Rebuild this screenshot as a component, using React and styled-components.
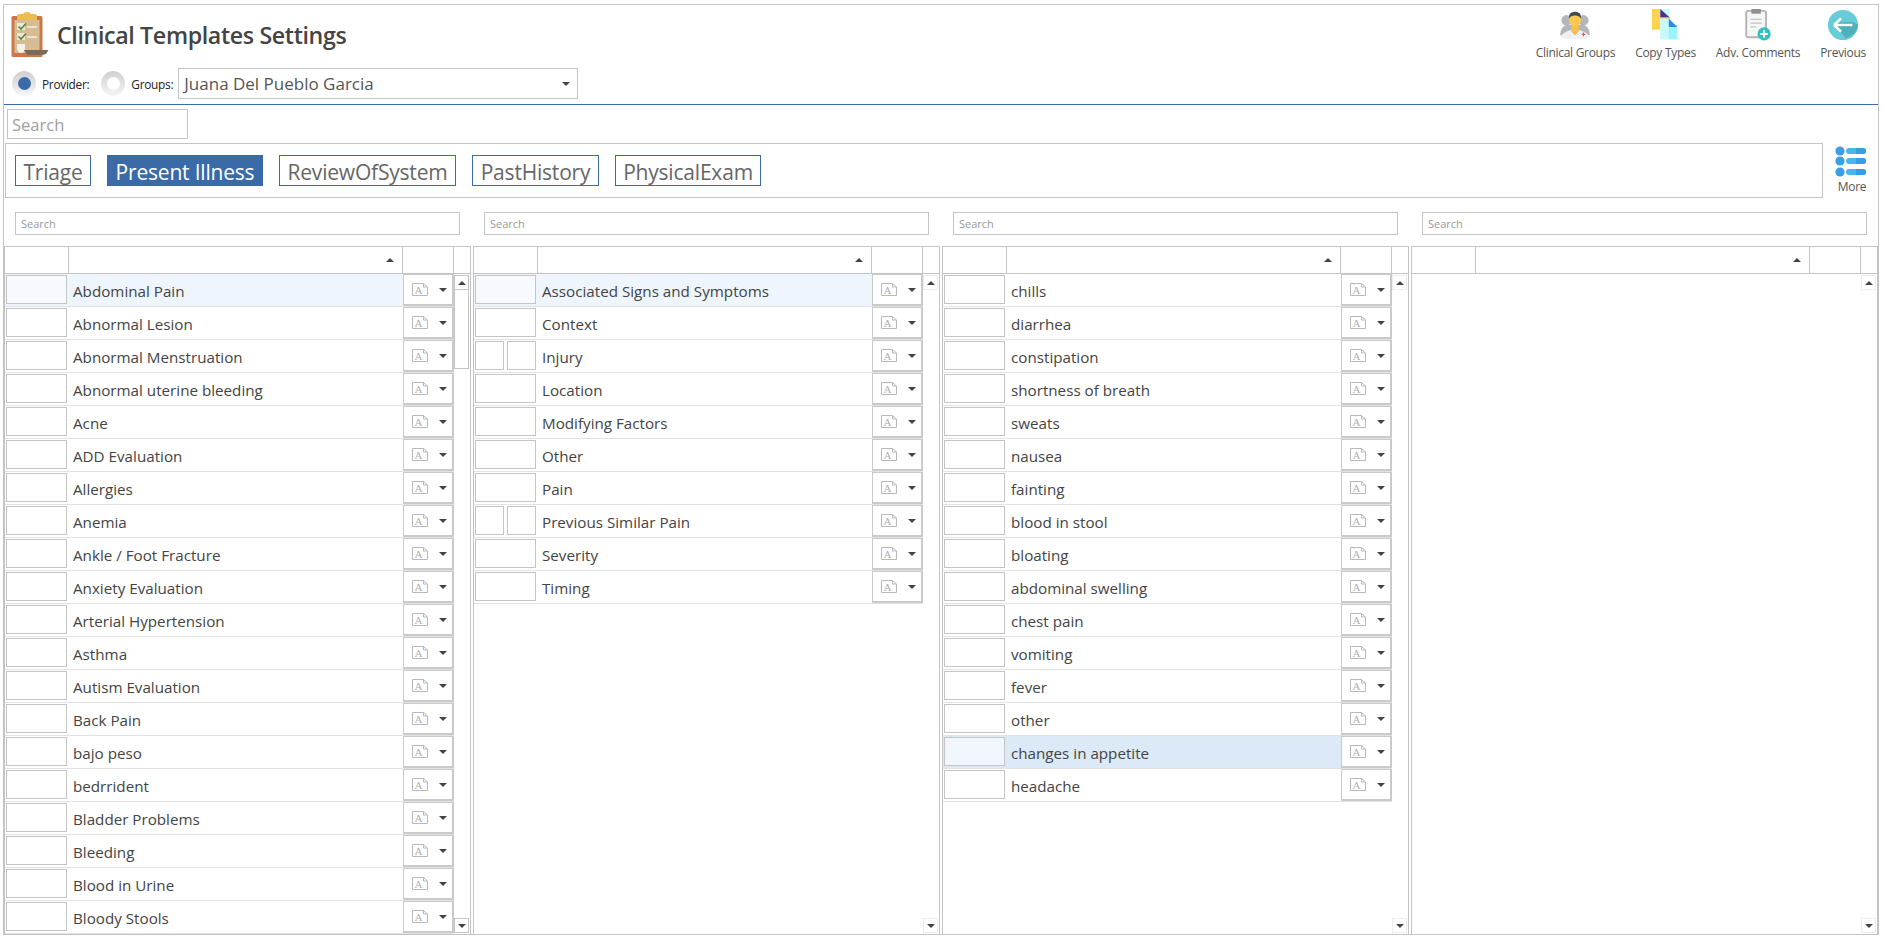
import React from 'react'
import styled, { createGlobalStyle } from 'styled-components'

const GlobalStyle = createGlobalStyle`
  html, body {
    margin: 0;
    height: 100%;
    overflow: hidden;
    background: #fff;
  }
  body {
    font-family: "Open Sans", "Noto Sans", sans-serif;
    color: #444;
  }
  * { box-sizing: border-box; }
`

const Frame = styled.div`
  width: 1876px;
  height: 931px;
  margin: 4px 0 0 3px;
  border: 1px solid #c4c4c4;
  display: flex;
  flex-direction: column;
  overflow: hidden;
`

const Header = styled.header`
  height: 100px;
  flex: none;
  border-bottom: 1px solid #3a6ba8;
  display: flex;
  justify-content: space-between;
  padding: 0 12px 0 7px;
`

const HeaderLeft = styled.div`
  display: flex;
  flex-direction: column;
  padding-top: 7px;
`

const TitleRow = styled.div`
  height: 46px;
  display: flex;
  align-items: center;
  gap: 8px;
`

const Title = styled.h1`
  margin: 0;
  font-size: 23.2px;
  font-weight: 600;
  color: #444;
  letter-spacing: -0.35px;
`

const PickerRow = styled.div`
  margin-top: 10px;
  display: flex;
  align-items: center;
  height: 31px;
  margin-left: 1px;
`

const Radio = styled.span`
  width: 24px;
  height: 25px;
  border-radius: 50%;
  background: linear-gradient(#cfcfcf, #f6f6f6);
  display: flex;
  align-items: center;
  justify-content: center;
  flex: none;

  &::after {
    content: '';
    width: 13px;
    height: 13px;
    border-radius: 50%;
    background: ${(p) => (p.$on ? '#3a6ba8' : '#fff')};
  }
`

const RadioLabel = styled.span`
  font-size: 11.9px;
  color: #222;
  letter-spacing: -0.3px;
  margin: 0 ${(p) => p.$after}px 0 6px;
`

const Select = styled.div`
  width: 400px;
  height: 31px;
  border: 1px solid #c4c4c4;
  display: flex;
  align-items: center;
  justify-content: space-between;
  padding: 0 7px 0 5px;
  font-size: 17px;
  color: #555;
`

const Caret = styled.span`
  width: 0;
  height: 0;
  border-left: 4px solid transparent;
  border-right: 4px solid transparent;
  border-${(p) => (p.$up ? 'bottom' : 'top')}: 4px solid #444;
`

const Toolbar = styled.nav`
  display: flex;
  gap: 20px;
  padding-top: 4px;
`

const ToolButton = styled.div`
  display: flex;
  flex-direction: column;
  align-items: center;
  font-size: 12px;
  line-height: 16px;
  color: #555;
  letter-spacing: -0.3px;
  white-space: nowrap;

  svg { display: block; height: 32px; margin-bottom: 4px; }
`

const MainSearch = styled.div`
  width: 181px;
  height: 30px;
  margin: 4px 0 0 3px;
  flex: none;
  border: 1px solid #c4c4c4;
  padding: 0 4px;
  display: flex;
  align-items: center;
  font-size: 16.5px;
  color: #a0a0a0;
`

const TabRow = styled.div`
  margin-top: 4px;
  height: 55px;
  flex: none;
  display: flex;
  padding-left: 1px;
`

const TabPanel = styled.div`
  width: 1818px;
  border: 1px solid #c4c4c4;
  padding: 11px 0 0 9px;
  display: flex;
  gap: 16px;
`

const Tab = styled.div`
  height: 31px;
  width: ${(p) => p.$w}px;
  border: 1px solid #3a6ba8;
  background: ${(p) => (p.$active ? '#3a6ba8' : '#fff')};
  color: ${(p) => (p.$active ? '#fff' : '#666')};
  font-size: 21px;
  letter-spacing: -0.2px;
  padding-top: 2px;
  display: flex;
  align-items: center;
  justify-content: center;
  white-space: nowrap;
`

const MoreButton = styled.div`
  flex: 1;
  display: flex;
  flex-direction: column;
  align-items: center;
  padding: 3px 0 0 3px;
  font-size: 12px;
  letter-spacing: -0.3px;
  color: #555;
  line-height: 14px;

  svg { display: block; margin-bottom: 3px; }
`

const SearchRow = styled.div`
  margin-top: 14px;
  padding: 0 11px;
  height: 23px;
  flex: none;
  display: grid;
  grid-template-columns: repeat(4, 1fr);
  gap: 24px;
`

const ColumnSearch = styled.div`
  border: 1px solid #c4c4c4;
  padding: 0 5px;
  display: flex;
  align-items: center;
  font-size: 11px;
  color: #999;
`

const Grids = styled.div`
  margin-top: 11px;
  flex: 1;
  min-height: 0;
  display: grid;
  grid-template-columns: repeat(4, 1fr);
  gap: 2px;
`

const Panel = styled.section`
  border: 1px solid #c4c4c4;
  border-bottom: 0;
  display: flex;
  flex-direction: column;
  min-height: 0;
  overflow: hidden;
`

const HeadRow = styled.div`
  height: 27px;
  flex: none;
  display: grid;
  grid-template-columns: 64px 1fr 51px 16px;
  border-bottom: 1px solid #c4c4c4;
`

const HeadCell = styled.div`
  border-right: ${(p) => (p.$last ? '0' : '1px solid #c4c4c4')};
  display: flex;
  align-items: center;
  justify-content: flex-end;
  padding-right: 8px;
`

const Body = styled.div`
  flex: 1;
  min-height: 0;
  display: flex;
`

const List = styled.div`
  flex: 1;
  min-width: 0;
`

const Row = styled.div`
  height: 33px;
  display: grid;
  grid-template-columns: 64px 1fr 51px;
  border-bottom: 1px solid #e2e2e2;
  background: ${(p) => p.$bg || 'transparent'};
`

const CheckCell = styled.div`
  padding: 1px 2px 2px 1px;
  display: flex;
  gap: 3px;
`

const CheckBox = styled.div`
  flex: 1;
  border: 1px solid #c4c4c4;
  background: ${(p) => p.$bg || 'transparent'};
`

const RowLabel = styled.div`
  padding: 2px 0 0 4px;
  display: flex;
  align-items: center;
  font-size: 15.2px;
  color: #444;
`

const ActionBox = styled.div`
  height: 32px;
  background: #fff;
  border: 2px solid #cacaca;
  border-top-width: 1px;
  border-left-width: 1px;
  display: flex;
  align-items: center;
  padding: 0 5px 0 8px;
  justify-content: space-between;
`

const ScrollCol = styled.div`
  width: 16px;
  flex: none;
  display: flex;
  flex-direction: column;
  justify-content: space-between;
  padding-bottom: 1px;
`

const ScrollTop = styled.div`
  display: flex;
  flex-direction: column;
`

const ScrollButton = styled.div`
  width: 15px;
  height: 15px;
  margin-top: ${(p) => (p.$up ? '1px' : '0')};
  border: 1px solid ${(p) => (p.$strong ? '#c4c4c4' : '#ececec')};
  display: flex;
  align-items: center;
  justify-content: center;
`

const Thumb = styled.div`
  width: 15px;
  height: 79px;
  border: 1px solid #c4c4c4;
  border-top: 0;
`

const ClipboardIcon = () => (
  <svg width="38" height="46" viewBox="0 0 38 46" style={{ flex: 'none' }}>
    <rect x="0.5" y="4" width="31" height="41" rx="1.5" fill="#c9784b" />
    <rect x="3.5" y="8" width="25" height="33" fill="#d6bb93" />
    <path d="M6 4 Q6 2 9 2 L12 2 Q13 0 16 0 Q19 0 20 2 L23 2 Q26 2 26 4 L26 8 L6 8 Z" fill="#ecbc50" />
    <rect x="6" y="11" width="8" height="7" fill="#efe6d6" />
    <rect x="6" y="21" width="8" height="7" fill="#efe6d6" />
    <path d="M7.5 14.5 L10 17 L15 11.5" stroke="#4f8a3c" strokeWidth="1.6" fill="none" />
    <path d="M7.5 24.5 L10 27 L15 21.5" stroke="#4f8a3c" strokeWidth="1.6" fill="none" />
    <path d="M16 15 H26 M16 25 H26" stroke="#f4eee2" strokeWidth="1.4" />
    <path d="M6 32 H14 V37 Q13 41 10 41 Q7 41 6 37 Z" fill="#f6f2ea" />
    <path d="M13 38 H37.5 L35 42 Q32 43 30 43 H16 Z" fill="#7a6a58" />
  </svg>
)

const DoctorIcon = () => (
  <svg width="34" height="34" viewBox="0 0 34 34">
    <circle cx="8" cy="12" r="5.5" fill="#b3b6ba" />
    <circle cx="26" cy="12" r="5.5" fill="#b3b6ba" />
    <path d="M1 28 Q2 18 8 17 H26 Q32 18 33 28 Z" fill="#b3b6ba" />
    <path d="M1 30 Q6 22 17 22 Q28 22 33 30 Q30 32 17 32 Q4 32 1 30 Z" fill="#f1f1f1" />
    <path d="M13 18 H21 V24 L17 28 L13 24 Z" fill="#f5c04f" />
    <ellipse cx="17" cy="11.5" rx="6.5" ry="7.5" fill="#fbc94f" />
    <path d="M10.5 10 Q10 3 17 3 Q24 3 23.5 10 Q21 6.5 17 7 Q13 6.5 10.5 10 Z" fill="#3c4a57" />
    <path d="M24 27 H28 M26 25 V29" stroke="#e05a5a" strokeWidth="1.2" />
  </svg>
)

const CopyIcon = () => (
  <svg width="28" height="34" viewBox="0 0 28 34">
    <rect x="0" y="0" width="9" height="22" fill="#fbd34f" />
    <rect x="9" y="0" width="10" height="32" fill="#c8f8fa" />
    <path d="M9 0 L19 9 H9 Z" fill="#44328c" />
    <path d="M9 9 H19 V10 H9 Z" fill="#f4b63c" />
    <rect x="18" y="17" width="9" height="15" fill="#98f5fb" />
    <path d="M18 10 L27 19 H18 Z" fill="#2a8ae6" />
  </svg>
)

const NoteAddIcon = () => (
  <svg width="28" height="34" viewBox="0 0 28 34">
    <rect x="1.5" y="2" width="21" height="28" rx="2" fill="#f6f6f6" stroke="#b4b4b4" strokeWidth="2" />
    <path d="M7 0 H17 V5 H7 Z" fill="#8f8f8f" />
    <path d="M6 11 H18 M6 15 H18 M6 19 H12" stroke="#c4c4c4" strokeWidth="1.2" />
    <circle cx="20.5" cy="26.5" r="7" fill="#35bfc2" />
    <path d="M20.5 22.5 V30.5 M16.5 26.5 H24.5" stroke="#fff" strokeWidth="2" />
  </svg>
)

const BackIcon = () => (
  <svg width="32" height="34" viewBox="0 0 32 34">
    <circle cx="16" cy="17" r="16" fill="#67ccd7" />
    <path d="M7 17 L19 31 A16 16 0 0 0 32 17 L27 14 H13 Z" fill="#4db0bb" />
    <path d="M6.5 17 L14 10 M6.5 17 L14 24" stroke="#fff" strokeWidth="2.6" fill="none" />
    <path d="M7 17 H26" stroke="#fff" strokeWidth="2.6" />
  </svg>
)

const MoreIcon = () => (
  <svg width="34" height="31" viewBox="0 0 34 31">
    {[5, 15, 26].map((y) => (
      <g key={y}>
        <circle cx="5" cy={y} r="4.6" fill="#3b9fe8" />
        <rect x="11" y={y - 3} width="20" height="6" rx="3" fill="#4ab5ec" />
        <path d={`M21 ${y - 3} H28 A3 3 0 0 1 28 ${y + 3} H21 Z`} fill="#379ee4" />
      </g>
    ))}
  </svg>
)

const NoteTypeIcon = () => (
  <svg width="17" height="13" viewBox="0 0 17 13">
    <path d="M0.5 0.5 H11.5 L15.5 4 V12.5 H0.5 Z M11.5 0.5 V4 H15.5" fill="#fff" stroke="#b8b8b8" />
    <text x="6.5" y="10.5" fontFamily="'Liberation Serif', serif" fontSize="11" textAnchor="middle" fill="#b0b0b0">A</text>
  </svg>
)

const tabs = [
  { name: 'Triage', w: 76 },
  { name: 'Present Illness', w: 156, active: true },
  { name: 'ReviewOfSystem', w: 177 },
  { name: 'PastHistory', w: 127 },
  { name: 'PhysicalExam', w: 146 },
]

const tools = [
  { name: 'Clinical Groups', Icon: DoctorIcon },
  { name: 'Copy Types', Icon: CopyIcon },
  { name: 'Adv. Comments', Icon: NoteAddIcon },
  { name: 'Previous', Icon: BackIcon },
]

const columns = [
  {
    thumb: true,
    selected: 0,
    items: [
      'Abdominal Pain', 'Abnormal Lesion', 'Abnormal Menstruation', 'Abnormal uterine bleeding', 'Acne',
      'ADD Evaluation', 'Allergies', 'Anemia', 'Ankle / Foot Fracture', 'Anxiety Evaluation',
      'Arterial Hypertension', 'Asthma', 'Autism Evaluation', 'Back Pain', 'bajo peso',
      'bedrrident', 'Bladder Problems', 'Bleeding', 'Blood in Urine', 'Bloody Stools',
    ],
  },
  {
    selected: 0,
    split: ['Injury', 'Previous Similar Pain'],
    items: [
      'Associated Signs and Symptoms', 'Context', 'Injury', 'Location', 'Modifying Factors',
      'Other', 'Pain', 'Previous Similar Pain', 'Severity', 'Timing',
    ],
  },
  {
    strong: 15,
    items: [
      'chills', 'diarrhea', 'constipation', 'shortness of breath', 'sweats', 'nausea', 'fainting',
      'blood in stool', 'bloating', 'abdominal swelling', 'chest pain', 'vomiting', 'fever', 'other',
      'changes in appetite', 'headache',
    ],
  },
  { items: [] },
]

function GridRow({ label, split, tone }) {
  const bg = tone === 'strong' ? '#dce9f6' : tone === 'soft' ? '#eef5fc' : undefined
  const boxBg = tone === 'strong' ? '#f0f6fc' : tone === 'soft' ? '#f6fafe' : undefined
  return (
    <Row $bg={bg}>
      <CheckCell>
        <CheckBox $bg={boxBg} />
        {split && <CheckBox />}
      </CheckCell>
      <RowLabel>{label}</RowLabel>
      <ActionBox>
        <NoteTypeIcon />
        <Caret />
      </ActionBox>
    </Row>
  )
}

function GridPanel({ column }) {
  return (
    <Panel>
      <HeadRow>
        <HeadCell />
        <HeadCell><Caret $up /></HeadCell>
        <HeadCell />
        <HeadCell $last />
      </HeadRow>
      <Body>
        <List>
          {column.items.map((item, i) => (
            <GridRow
              key={item}
              label={item}
              split={column.split && column.split.includes(item)}
              tone={column.selected === i ? 'soft' : column.strong === i + 1 ? 'strong' : undefined}
            />
          ))}
        </List>
        <ScrollCol>
          <ScrollTop>
            <ScrollButton $up $strong={column.thumb}><Caret $up /></ScrollButton>
            {column.thumb && <Thumb />}
          </ScrollTop>
          <ScrollButton $strong={column.thumb}><Caret /></ScrollButton>
        </ScrollCol>
      </Body>
    </Panel>
  )
}

export default function App() {
  return (
    <>
      <GlobalStyle />
      <Frame>
        <Header>
          <HeaderLeft>
            <TitleRow>
              <ClipboardIcon />
              <Title>Clinical Templates Settings</Title>
            </TitleRow>
            <PickerRow>
              <Radio $on />
              <RadioLabel $after={12}>Provider:</RadioLabel>
              <Radio />
              <RadioLabel $after={5}>Groups:</RadioLabel>
              <Select>
                Juana Del Pueblo Garcia
                <Caret />
              </Select>
            </PickerRow>
          </HeaderLeft>
          <Toolbar>
            {tools.map(({ name, Icon }) => (
              <ToolButton key={name}>
                <Icon />
                {name}
              </ToolButton>
            ))}
          </Toolbar>
        </Header>
        <MainSearch>Search</MainSearch>
        <TabRow>
          <TabPanel>
            {tabs.map((tab) => (
              <Tab key={tab.name} $w={tab.w} $active={tab.active}>{tab.name}</Tab>
            ))}
          </TabPanel>
          <MoreButton>
            <MoreIcon />
            More
          </MoreButton>
        </TabRow>
        <SearchRow>
          {columns.map((_, i) => (
            <ColumnSearch key={i}>Search</ColumnSearch>
          ))}
        </SearchRow>
        <Grids>
          {columns.map((column, i) => (
            <GridPanel key={i} column={column} />
          ))}
        </Grids>
      </Frame>
    </>
  )
}
